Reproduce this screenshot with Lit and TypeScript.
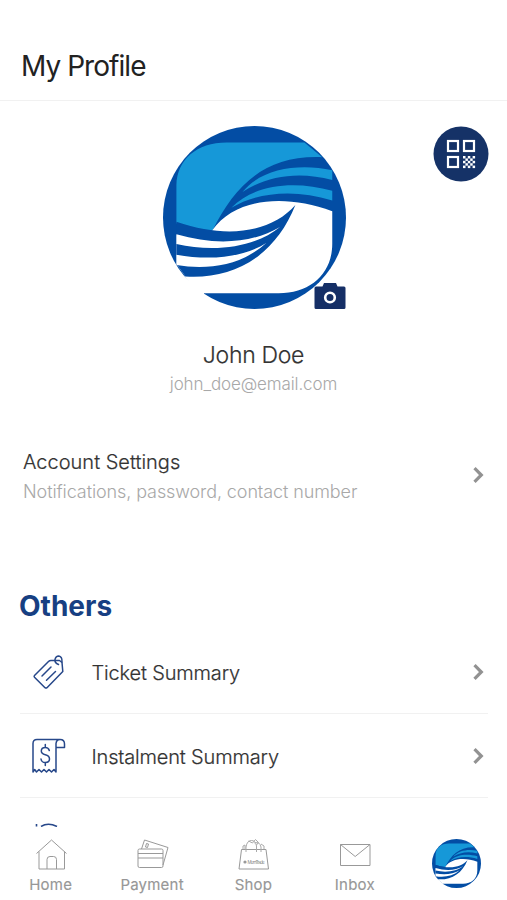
import { LitElement, html, css, svg } from "lit";
import { customElement, property } from "lit/decorators.js";

@customElement("brand-logo")
class BrandLogo extends LitElement {
  static styles = css`
    :host { display: block; }
    svg { display: block; width: 100%; height: 100%; }
  `;
  render() {
    return html`<svg viewBox="25 19 546 546">
      <defs><clipPath id="disc"><circle cx="298" cy="292" r="273" /></clipPath></defs>
      <g clip-path="url(#disc)">
        <rect x="25" y="19" width="546" height="546" fill="#034da4" />
        <path fill="#1698d8" d="M65 310V195C67 120 125 68 215 68H447L500 112C330 105 240 195 172 332Q120 328 65 310Z" />
        <path fill="#1698d8" d="M262 216C320 145 430 130 530 151V180C430 153 335 167 262 216Z" />
        <path fill="#1698d8" d="M229 263C300 190 420 182 530 212V241C420 207 310 215 229 263Z" />
        <path fill="#fff" d="M172 330C240 235 385 220 530 273V370C530 460 465 518 370 518H145L80 540L30 468H92L65 430V345L172 345Z" />
        <path fill="#034da4" d="M420 255C350 335 220 358 65 305V430L92 468C240 477 360 405 420 255Z" />
        <path fill="#fff" d="M65 342C180 376 290 370 374 320C300 381 180 397 65 371Z" />
        <path fill="#fff" d="M65 403C160 420 260 414 333 368C260 435 160 450 65 434Z" />
      </g>
      <path fill="#fff" d="M90 469L148 518L130 545L60 500Z" />
    </svg>`;
  }
}

const chevron = html`<svg class="chevron" width="12" height="18" viewBox="0 0 12 18" fill="none" stroke="#929292" stroke-width="3.2"><path d="M2.500 2.200L9.300 9L2.500 15.800" /></svg>`;

const navIcons: Record<string, unknown> = {
  Home: svg`<path d="M2.500 15.500L17.500 2L32.500 15.500M5 13.500V31H30.500V13.500M13 31V21.500Q13 18.500 16 18.500H19.500Q22.500 18.500 22.500 21.500V31"/>`,
  Payment: svg`<rect x="3" y="11" width="25" height="18.500" rx="1.500"/><path d="M3 15.500H28M3 20H28M6.500 11L9.500 2L33 9.500L28 27M11.500 5.500L13.500 6L12.500 9.500L10.500 9Z"/>`,
  Shop: svg`<path d="M5.500 11.500H30L32.500 31H3Z"/><path stroke="#aaa" d="M10 14V9Q11 2.500 15.500 2.500Q19.500 2.500 20.500 8V14M25 14V9Q23.500 3 18.500 5M7 11V8L9 7V11M12.500 3L16.500 5L19.500 1.500L22.500 4.500L20.500 7M28 11V8L25 6"/>`,
  Inbox: svg`<path d="M2.500 6.500H32V27.500H2.500ZM2.500 6.500L17.200 18.500L32 6.500"/>`,
};

@customElement("nav-item")
class NavItem extends LitElement {
  @property() label = "";
  static styles = css`
    :host { display: flex; flex-direction: column; align-items: center; }
    svg { display: block; width: 34px; height: 32px; fill: none; stroke: #999; stroke-width: 1; }
    .print { font: 4.500px Inter, sans-serif; fill: #888; stroke: none; }
    .label { margin-top: 5px; font: 400 15px/20px Inter, sans-serif; color: #979797; letter-spacing: 0.22px; -webkit-text-stroke: 0.15px #979797; }
  `;
  render() {
    return html`<svg viewBox="0 0 34 32">${navIcons[this.label]}
        ${this.label === "Shop" ? svg`<circle cx="9" cy="24" r="1.600" fill="#999" stroke="none"/><text class="print" x="11.500" y="25.500" textLength="17">MomTrade</text>` : ""}
      </svg>
      <div class="label">${this.label}</div>`;
  }
}

@customElement("app-root")
class AppRoot extends LitElement {
  static styles = css`
    :host { display: block; height: 900px; background: #fff; font-family: Inter, "Liberation Sans", sans-serif; font-weight: 300; color: #333; }
    .screen { height: 900px; display: flex; flex-direction: column; overflow: hidden; }
    .header { box-sizing: border-box; flex: none; height: 101px; padding: 48px 21px 0; border-bottom: 1px solid #f1f1f1; font-size: 28px; line-height: 36px; font-weight: 400; letter-spacing: -0.95px; color: #222; }
    .content { flex: 1; min-height: 0; overflow: hidden; display: flex; flex-direction: column; }
    .profile { flex: none; height: 322px; position: relative; display: flex; flex-direction: column; align-items: center; }
    .avatar { position: relative; width: 183px; height: 183px; margin: 25px 0 0 1px; }
    .avatar brand-logo { width: 183px; height: 183px; }
    .camera { position: absolute; left: 151px; top: 156px; }
    .qr { position: absolute; right: 18px; top: 25px; width: 56px; height: 56px; }
    .name, .account-title, .row .text { -webkit-text-stroke: 0.2px #333; }
    .name { margin-top: 32px; font-size: 23px; line-height: 28px; letter-spacing: -0.3px; }
    .email { margin-top: 3px; font-size: 17px; line-height: 24px; color: #a8a8a8; letter-spacing: -0.12px; }
    .account { flex: none; height: 106px; padding: 0 23px 0 23px; display: flex; justify-content: space-between; }
    .account .chevron { margin-top: 43px; }
    .account-title { margin-top: 26px; font-size: 20px; line-height: 26px; letter-spacing: 0; }
    .account-sub { margin-top: 5px; font-size: 18px; line-height: 24px; color: #a8a8a8; letter-spacing: -0.1px; }
    .section { flex: none; margin: 60px 19px 0; height: 41px; font-size: 28px; line-height: 34px; font-weight: 700; color: #173f82; letter-spacing: 0; }
    .row { box-sizing: border-box; flex: none; height: 84px; margin: 0 19px 0 20px; padding-right: 4px; border-bottom: 1px solid #f1f1f1; display: flex; align-items: center; }
    .row svg.icon { width: 36px; height: 38px; margin-left: 11px; fill: none; stroke: #27488a; stroke-width: 1.500; stroke-linecap: round; stroke-linejoin: round; }
    .row .text { flex: 1; margin: 2px 0 0 24.500px; font-size: 20px; line-height: 26px; letter-spacing: -0.17px; }
    .peek { flex: none; margin: 25px 0 0 33px; }
    .tabs { flex: none; height: 73px; background: #fff; display: grid; grid-template-columns: repeat(5, 101.400px); padding-top: 11px; box-sizing: border-box; }
    .tabs brand-logo { width: 49px; height: 49px; justify-self: center; margin-top: 1px; }
  `;
  render() {
    return html`<div class="screen">
      <div class="header">My Profile</div>
      <div class="content">
        <div class="profile">
          <div class="avatar">
            <brand-logo></brand-logo>
            <svg class="camera" width="32" height="28" viewBox="0 0 32 28">
              <path fill="#152f66" d="M2 4.500H8.500L10 1H22L23.500 4.500H30Q31.500 4.500 31.500 6V25.500Q31.500 27 30 27H2Q.500 27 .500 25.500V6Q.500 4.500 2 4.500Z" />
              <circle cx="16" cy="15.500" r="4.800" fill="none" stroke="#fff" stroke-width="2.600" />
            </svg>
          </div>
          <svg class="qr" viewBox="0 0 56 56">
            <circle cx="28" cy="28" r="27.500" fill="#153267" />
            <g fill="none" stroke="#fff" stroke-width="2.200"><rect x="15" y="15" width="10" height="10" /><rect x="31" y="15" width="10" height="10" /><rect x="15" y="31" width="10" height="10" /></g>
            <g fill="#fff">${[0, 1, 2, 3, 4].flatMap((r) => [0, 1, 2, 3, 4].filter((c) => (r + c) % 2 === 0).map((c) => svg`<rect x=${30 + c * 2.4} y=${30 + r * 2.4} width="2.500" height="2.500" />`))}</g>
          </svg>
          <div class="name">John Doe</div>
          <div class="email">john_doe@email.com</div>
        </div>
        <div class="account">
          <div>
            <div class="account-title">Account Settings</div>
            <div class="account-sub">Notifications, password, contact number</div>
          </div>
          ${chevron}
        </div>
        <div class="section">Others</div>
        <div class="row">
          <svg class="icon" viewBox="0 0 36 38">
            <path d="M3.500 22.500L17.500 8.500Q18.500 7.500 20 7.500H28.500L31 9.500L31.800 18.500L16 34.700Q15 35.500 14 34.700L3.500 24.300Q2.700 23.300 3.500 22.500ZM11 23L20 14M15.500 27.200L24.500 18.500" />
            <path d="M27.500 11.500Q23.500 10 24 6.500Q24.800 3 27.800 3Q31.300 3.500 31 9" />
          </svg>
          <div class="text">Ticket Summary</div>${chevron}
        </div>
        <div class="row">
          <svg class="icon" viewBox="0 0 36 38">
            <path d="M2 35V6.500Q2 2.500 6 2.500H29Q33.500 2.500 33.500 7V10.500H25V35L23 32.500L20.500 35L18 32.500L15.500 35L13 32.500L10.500 35L8 32.500L5.500 35L3.700 32.500L2 35M25 10V6.500Q25.500 2.500 29 2.500" />
            <path d="M18.300 13.500Q17.500 10.500 14.300 10.500Q10.300 10.500 10.300 14Q10.300 16.800 14.300 17.800Q18.500 18.800 18.500 22Q18.500 25.500 14.300 25.500Q10.500 25.500 10 22M14.300 7.500V10.500M14.300 25.500V28.500" />
          </svg>
          <div class="text">Instalment Summary</div>${chevron}
        </div>
        <svg class="peek" width="30" height="4" viewBox="0 0 30 4" fill="none" stroke="#27488a" stroke-width="1.600"><path d="M3.500 1V3.500M8 3.500Q15 -1 24 3.500" /></svg>
      </div>
      <div class="tabs">
        <nav-item label="Home"></nav-item>
        <nav-item label="Payment"></nav-item>
        <nav-item label="Shop"></nav-item>
        <nav-item label="Inbox"></nav-item>
        <brand-logo></brand-logo>
      </div>
    </div>`;
  }
}
